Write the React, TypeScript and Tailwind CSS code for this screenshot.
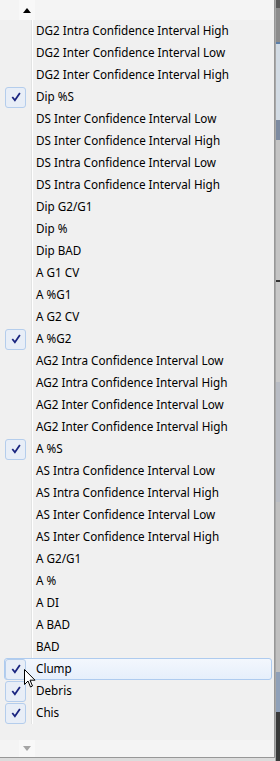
import React from "react";

type Item = { label: string; checked?: boolean; hover?: boolean };

const ITEMS: Item[] = [
  { label: "DG2 Intra Confidence Interval High" },
  { label: "DG2 Inter Confidence Interval Low" },
  { label: "DG2 Inter Confidence Interval High" },
  { label: "Dip %S", checked: true },
  { label: "DS Inter Confidence Interval Low" },
  { label: "DS Inter Confidence Interval High" },
  { label: "DS Intra Confidence Interval Low" },
  { label: "DS Intra Confidence Interval High" },
  { label: "Dip G2/G1" },
  { label: "Dip %" },
  { label: "Dip BAD" },
  { label: "A G1 CV" },
  { label: "A %G1" },
  { label: "A G2 CV" },
  { label: "A %G2", checked: true },
  { label: "AG2 Intra Confidence Interval Low" },
  { label: "AG2 Intra Confidence Interval High" },
  { label: "AG2 Inter Confidence Interval Low" },
  { label: "AG2 Inter Confidence Interval High" },
  { label: "A %S", checked: true },
  { label: "AS Intra Confidence Interval Low" },
  { label: "AS Intra Confidence Interval High" },
  { label: "AS Inter Confidence Interval Low" },
  { label: "AS Inter Confidence Interval High" },
  { label: "A G2/G1" },
  { label: "A %" },
  { label: "A DI" },
  { label: "A BAD" },
  { label: "BAD" },
  { label: "Clump", checked: true, hover: true },
  { label: "Debris", checked: true },
  { label: "Chis", checked: true },
];

// coche bleu foncé du menu
function Check() {
  return (
    <svg width="10" height="10" viewBox="0 0 10 10">
      <path d="M1.3 5 L3.9 8.2 L8.9 1" fill="none" stroke="#1a2580" strokeWidth="1.8" />
    </svg>
  );
}

// pointeur de souris
function Cursor() {
  return (
    <svg width="12" height="19" viewBox="0 0 12 19" className="absolute left-[24px] top-[669px]">
      <path
        d="M0.5 0.5 L0.5 15.5 L4 12 L6.5 18 L8.5 17 L6 11.2 L11 11.2 Z"
        fill="#fff"
        stroke="#000"
        strokeWidth="1"
        strokeLinejoin="miter"
      />
    </svg>
  );
}

function Row({ item }: { item: Item }) {
  return (
    <div className="relative h-[22px] flex items-center">
      {item.hover && (
        <div className="absolute left-[4px] right-[2px] top-0 bottom-0 rounded-[3px] border border-[#aecbef] bg-gradient-to-b from-[#f3f7fd] to-[#e6effb]" />
      )}
      <div className="relative w-[31px] h-full flex items-center">
        {item.checked && (
          <div className="ml-[5px] w-[21px] h-[21px] rounded-[3px] border border-[#b4cdec] bg-[#e8eef7] flex items-center justify-center">
            <Check />
          </div>
        )}
      </div>
      <span className="relative ml-[5px] text-[11.7px] text-black leading-none whitespace-nowrap">{item.label}</span>
    </div>
  );
}

function Arrow({ up }: { up?: boolean }) {
  return (
    <div className="ml-[19px] w-[16px] h-full bg-[#f8f8f8] flex items-center justify-center">
      <svg width="8" height="5" viewBox="0 0 8 5">
        {up ? <path d="M0 5 L4 0 L8 5 Z" fill="#000" /> : <path d="M0 0 L8 0 L4 5 Z" fill="#a5a5a5" />}
      </svg>
    </div>
  );
}

export default function App() {
  return (
    <div className="relative w-[280px] h-[761px] flex bg-[#dcdcdc]" style={{ fontFamily: '"Noto Sans", sans-serif' }}>
      <div className="w-[275px] h-[758px] flex flex-col bg-[#f0f0f0] border-r border-b border-[#979797]">
        <div className="h-[20px] bg-[#f4f4f4]">
          <Arrow up />
        </div>
        <div className="relative">
          <div className="absolute left-[31px] top-0 bottom-0 w-[1px] bg-[#e2e3e3]" />
          <div className="absolute left-[32px] top-0 bottom-0 w-[1px] bg-white" />
          {ITEMS.map((it) => (
            <Row key={it.label} item={it} />
          ))}
        </div>
        <div className="flex-1" />
        <div className="h-[17px] bg-[#f4f4f4]">
          <Arrow />
        </div>
      </div>
      {/* fenêtre derrière le menu */}
      <div className="flex-1 flex flex-col border-l border-[#a8a8a8]">
        <div className="h-[8px] bg-[#5a5a5a]" />
        <div className="h-[34px] bg-[#8c8c8c]" />
        <div className="h-[2px] bg-[#5b7fa8]" />
        <div className="h-[76px] bg-[#d2dbe4]" />
        <div className="h-[20px] bg-[#7c8aa0]" />
        <div className="h-[140px] bg-[#c4c4c4]" />
        <div className="h-[2px] bg-[#333]" />
        <div className="h-[100px] bg-[#c8c8c8]" />
        <div className="h-[120px] bg-[#b8bcc4]" />
        <div className="h-[170px] bg-[#c0c0c0]" />
        <div className="h-[40px] bg-[#8fa0b8]" />
        <div className="flex-1 bg-[#3a3a3a]" />
      </div>
      <Cursor />
    </div>
  );
}
